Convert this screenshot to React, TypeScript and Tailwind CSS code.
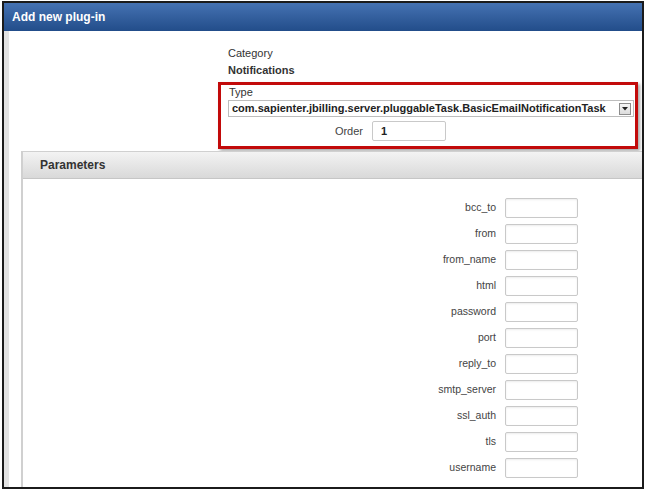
const params = [
  "bcc_to",
  "from",
  "from_name",
  "html",
  "password",
  "port",
  "reply_to",
  "smtp_server",
  "ssl_auth",
  "tls",
  "username",
];

function ParamRow({ name }: { name: string }) {
  return (
    <div className="flex items-center h-[20px] mb-[6px]">
      <div className="w-[473px] text-right text-[10.5px] text-[#444]">{name}</div>
      <input
        className="ml-[9px] w-[73px] h-[20px] border border-[#c9c9c9] rounded-[2px] bg-white shadow-[inset_0_1px_2px_rgba(0,0,0,0.08)] outline-none"
        defaultValue=""
      />
    </div>
  );
}

export default function App() {
  return (
    <div className="w-[645px] h-[491px] bg-white overflow-hidden font-['Liberation_Sans',Arial,sans-serif]">
      <div className="ml-[2px] mt-[1px] w-[642px] h-[488px] border-2 border-[#1b1b1b] flex flex-col overflow-hidden">
        <div className="h-[28px] shrink-0 bg-gradient-to-b from-[#4572b2] to-[#224d8a] flex items-center pl-[8px] text-white text-[12px] font-bold">
          Add new plug-in
        </div>
        <div className="flex-1 flex flex-col border-l-[5px] border-[#e3e3e3] min-h-0">
          <div className="pt-[14px] pl-[219px] text-[11px] text-[#333]">
            <div className="h-[17px] leading-[17px]">Category</div>
            <div className="h-[17px] leading-[17px] font-bold">Notifications</div>
          </div>

          <div className="mt-[3px] ml-[209px] w-[420px] border-[3px] border-[#c20a0a] shadow-[2px_2px_3px_rgba(0,0,0,0.35)] pb-[5px]">
            <div className="pl-[8px] h-[15px] leading-[14px] text-[11px] text-[#333]">Type</div>
            <div className="ml-[7px] w-[406px] h-[17px] border border-[#bdbdbd] bg-white flex items-center justify-between pl-[3px] pr-[2px]">
              <span className="text-[11px] font-bold text-[#222]">
                com.sapienter.jbilling.server.pluggableTask.BasicEmailNotificationTask
              </span>
              <span className="w-[12px] h-[12px] border border-[#8d8d8d] bg-gradient-to-b from-[#f6f6f6] to-[#dcdcdc] flex items-center justify-center">
                <svg width="6" height="4" viewBox="0 0 6 4">
                  <path d="M0 0 L6 0 L3 3.5 Z" fill="#222" />
                </svg>
              </span>
            </div>
            <div className="mt-[4px] pl-[82px] flex items-center">
              <div className="w-[60px] text-right text-[11px] text-[#444]">Order</div>
              <div className="ml-[9px] w-[74px] h-[20px] border border-[#c9c9c9] rounded-[2px] flex items-center pl-[8px] text-[11px] font-bold text-[#222]">
                1
              </div>
            </div>
          </div>

          <div className="mt-[2px] ml-[12px] flex-1 border-l-2 border-t border-[#d0d0d0] flex flex-col">
            <div className="h-[27px] shrink-0 bg-gradient-to-b from-[#f3f3f3] to-[#d9d9d9] border-b border-[#c6c6c6] flex items-center pl-[17px] text-[12px] font-bold text-[#333]">
              Parameters
            </div>
            <div className="pt-[19px]">
              {params.map((p) => (
                <ParamRow key={p} name={p} />
              ))}
            </div>
          </div>
        </div>
      </div>
    </div>
  );
}
